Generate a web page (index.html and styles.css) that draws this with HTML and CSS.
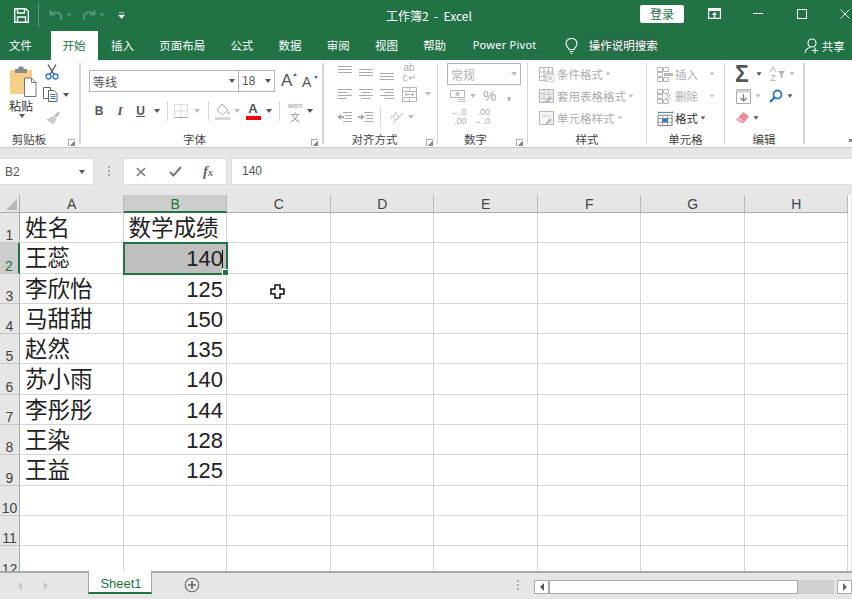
FILE: index.html
```html
<!DOCTYPE html>
<html lang="zh">
<head>
<meta charset="utf-8">
<title>工作簿2 - Excel</title>
<link rel="stylesheet" href="styles.css">
</head>
<body>
<div class="app">
  <header class="titlebar">
    <div class="qat">
      <svg class="ic-save" viewBox="0 0 15 15"><path d="M.7.7h11l2.600 2.600v11H.7z" fill="none" stroke="#fff" stroke-width="1.400"/><path d="M3.500 1v4h7V1M3.500 14V9h8v5" fill="none" stroke="#fff" stroke-width="1.300"/></svg>
      <span class="qat-sep"></span>
      <svg class="ic-undo" viewBox="0 0 14 12"><path d="M1.500 1v4.500H6M1.800 5.200C4 2.500 10 2.500 12 6c.8 1.800.3 3.800-1 5" fill="none" stroke="#5c9a79" stroke-width="1.600"/></svg>
      <i class="caret dim-green"></i>
      <svg class="ic-redo" viewBox="0 0 14 12"><path d="M12.500 1v4.500H8M12.200 5.200C10 2.500 4 2.500 2 6c-.8 1.800-.3 3.800 1 5" fill="none" stroke="#5c9a79" stroke-width="1.600"/></svg>
      <i class="caret dim-green"></i>
      <svg class="ic-custom" viewBox="0 0 7 7"><path d="M1 .5h5M.5 3h6L3.500 6.500z" fill="#fff" stroke="#fff" stroke-width=".6"/></svg>
    </div>
    <div class="doc-title">工作簿2&nbsp; -&nbsp; Excel</div>
    <div class="win">
      <button class="login">登录</button>
      <svg class="ic-display" viewBox="0 0 13 11"><path d="M.6.6h11.800v9.800H.6z" fill="none" stroke="#fff" stroke-width="1.200"/><path d="M1 1h11v2H1z" fill="#fff"/><path d="M6.500 4l2.700 2.700H7.300v3H5.700v-3H3.800z" fill="#fff"/></svg>
      <span class="w-min"></span>
      <span class="w-max"></span>
      <svg class="ic-close" viewBox="0 0 10 10"><path d="M.5.5l9 9M9.500.5l-9 9" stroke="#fff" stroke-width="1"/></svg>
    </div>
  </header>

  <nav class="tabs">
    <span class="tab tab-file">文件</span>
    <span class="tab tab-on">开始</span>
    <span class="tab">插入</span>
    <span class="tab">页面布局</span>
    <span class="tab">公式</span>
    <span class="tab">数据</span>
    <span class="tab">审阅</span>
    <span class="tab">视图</span>
    <span class="tab">帮助</span>
    <span class="tab tab-pp">Power Pivot</span>
    <svg class="ic-bulb" viewBox="0 0 13 16"><path d="M4 11.500C3.500 9.500 1 8.500 1 5.500a5.500 5 0 0 1 11 0c0 3-2.500 4-3 6zM4.500 13.500h4M5.500 15.300h2" fill="none" stroke="#fff" stroke-width="1.100"/></svg>
    <span class="tell">操作说明搜索</span>
    <span class="share">
      <svg class="ic-person" viewBox="0 0 17 16"><circle cx="8" cy="5" r="4" fill="none" stroke="#fff" stroke-width="1.100"/><path d="M1 15c.5-3 2.500-5 5-5.500M11 9.500v6M8 12.500h6" fill="none" stroke="#fff" stroke-width="1.100"/></svg>
      共享
    </span>
  </nav>

  <section class="ribbon">
    <div class="group g-clip">
      <div class="g-body clip-body">
        <div class="paste">
          <svg class="ic-paste" viewBox="0 0 28 31"><path d="M1 4h22v24H1z" fill="#f5cf87"/><path d="M6 3h3l1-2.500h4l1 2.500h3v4H6z" fill="#8a8a8a"/><path d="M15.500 12h7l4.500 4.500V30.500H15.500z" fill="#fff" stroke="#777" stroke-width="1"/><path d="M22.500 12v4.500H27" fill="none" stroke="#777"/></svg>
          <span class="paste-t">粘贴</span>
          <i class="caret"></i>
        </div>
        <div class="clip-tools">
          <svg class="ic-cut" viewBox="0 0 14 16"><path d="M3 .5l6 10M11 .5l-6 10" stroke="#555" stroke-width="1.300" fill="none"/><circle cx="3.500" cy="12.500" r="2.500" fill="none" stroke="#2b79c2" stroke-width="1.300"/><circle cx="10.500" cy="12.500" r="2.500" fill="none" stroke="#2b79c2" stroke-width="1.300"/></svg>
          <div class="copy-row">
            <svg class="ic-copy" viewBox="0 0 15 15"><path d="M.5.500h7v11h-7z" fill="#fff" stroke="#666"/><path d="M5.500 3.500h5.500l3 3v8h-8.500z" fill="#fff" stroke="#666"/><path d="M7.500 7.500h5M7.500 9.500h5M7.500 11.500h5" stroke="#2b79c2"/></svg>
            <i class="caret"></i>
          </div>
          <svg class="ic-brush" viewBox="0 0 16 16"><path d="M9 6L13 1.500l2 2-4 4.500z" fill="#bdbdbd"/><path d="M8.500 6l3 3-3 5.500L1 9.500z" fill="#c9c9c9"/></svg>
        </div>
      </div>
      <div class="g-label">剪贴板<i class="launcher"></i></div>
    </div>

    <div class="group g-font">
      <div class="g-body">
        <div class="font-row1">
          <div class="combo font-name"><span>等线</span><i class="caret"></i></div>
          <div class="combo font-size"><span>18</span><i class="caret"></i></div>
          <span class="grow-a">A<i class="up"></i></span>
          <span class="shrink-a">A<i class="down"></i></span>
        </div>
        <div class="font-row2">
          <b class="fmt fb">B</b>
          <i class="fmt fi">I</i>
          <u class="fmt fu">U</u>
          <i class="caret"></i>
          <span class="vsep"></span>
          <svg class="ic-border" viewBox="0 0 14 14"><path d="M.5.500h13v13H.5zM7 .5v13M.5 7h13" fill="none" stroke="#bbb" stroke-dasharray="1 1"/><path d="M.5 13.500h13" stroke="#aaa"/></svg>
          <i class="caret off"></i>
          <span class="vsep"></span>
          <svg class="ic-fill" viewBox="0 0 16 17"><path d="M7 1l6 6-5.500 5L2 7z" fill="#fff" stroke="#aaa"/><path d="M13.500 8l1.500 3h-3z" fill="#bbb"/><path d="M0 14h15v3H0z" fill="#d8d8d8"/></svg>
          <i class="caret off"></i>
          <span class="color-a">A</span>
          <i class="caret"></i>
          <span class="vsep"></span>
          <span class="wen"><small>wén</small>文</span>
          <i class="caret"></i>
        </div>
      </div>
      <div class="g-label">字体<i class="launcher"></i></div>
    </div>

    <div class="group g-align">
      <div class="g-body">
        <div class="al-row al-row1">
          <svg class="ic-lines-t" viewBox="0 0 14 14"><path d="M0 .5h14M0 3.500h14M0 6.500h14" stroke="#aaa"/></svg>
          <svg class="ic-lines-t" viewBox="0 0 14 14"><path d="M0 3.500h14M0 6.500h14M0 9.500h14" stroke="#aaa"/></svg>
          <svg class="ic-lines-t" viewBox="0 0 14 14"><path d="M0 7.500h14M0 10.500h14M0 13.500h14" stroke="#aaa"/></svg>
          <span class="wrap-t">ab<br>c↵</span>
        </div>
        <div class="al-row al-row2">
          <svg class="ic-lines" viewBox="0 0 14 12"><path d="M0 1.500h14M0 4.500h9M0 7.500h14M0 10.500h9" stroke="#aaa"/></svg>
          <svg class="ic-lines" viewBox="0 0 14 12"><path d="M0 1.500h14M2.500 4.500h9M0 7.500h14M2.500 10.500h9" stroke="#aaa"/></svg>
          <svg class="ic-lines" viewBox="0 0 14 12"><path d="M0 1.500h14M5 4.500h9M0 7.500h14M5 10.500h9" stroke="#aaa"/></svg>
          <svg class="ic-merge" viewBox="0 0 15 15"><path d="M.5.500h14v14H.5zM.5 4.500h14M.5 10.500h14M7.500.5v4M7.500 10.500v4" fill="none" stroke="#b5b5b5"/><path d="M3 7.500h9M3 7.500l2-1.500M3 7.500l2 1.500M12 7.500l-2-1.500M12 7.500l-2 1.500" stroke="#b5b5b5" fill="none"/></svg>
          <i class="caret off"></i>
        </div>
        <div class="al-row al-row3">
          <svg class="ic-indent" viewBox="0 0 15 12"><path d="M6 1.500h9M8 4.500h7M8 7.500h7M6 10.500h9" stroke="#aaa"/><path d="M0 6l4-3v2h3v2H4v2z" fill="#aaa"/></svg>
          <svg class="ic-indent" viewBox="0 0 15 12"><path d="M6 1.500h9M8 4.500h7M8 7.500h7M6 10.500h9" stroke="#aaa"/><path d="M7 6L3 3v2H0v2h3v2z" fill="#aaa"/></svg>
          <span class="vsep tall"></span>
          <svg class="ic-orient" viewBox="0 0 15 14"><path d="M1 9L8 2M4 13l10-10" stroke="#b5b5b5" fill="none"/><path d="M2 5l5 5M5 2l5 5" stroke="#c5c5c5"/></svg>
          <i class="caret off"></i>
        </div>
      </div>
      <div class="g-label">对齐方式<i class="launcher"></i></div>
    </div>

    <div class="group g-num">
      <div class="g-body">
        <div class="combo num-fmt"><span>常规</span><i class="caret off"></i></div>
        <div class="num-row2">
          <svg class="ic-money" viewBox="0 0 16 13"><path d="M.5.500h14v7H.5z" fill="none" stroke="#b5b5b5"/><circle cx="7.500" cy="4" r="2" fill="#bbb"/><path d="M8 9.500h7M8 11.500h7" stroke="#bbb"/></svg>
          <i class="caret off"></i>
          <span class="pct">%</span>
          <span class="comma">,</span>
        </div>
        <div class="num-row3">
          <span class="dec">←.0<br>.00</span>
          <span class="dec">.00<br>→.0</span>
        </div>
      </div>
      <div class="g-label">数字<i class="launcher"></i></div>
    </div>

    <div class="group g-style">
      <div class="g-body list">
        <div class="li">
          <svg class="ic-table" viewBox="0 0 15 15"><path d="M.5.500h13v13H.5zM5 .5v13M9.500.5v6M.5 5h13M.5 9.500h6" fill="none" stroke="#b5b5b5"/><path d="M7 7h8v8H7z" fill="#fff" stroke="#aaa"/><path d="M9 10h4M9 12h4" stroke="#aaa"/></svg>
          <span>条件格式</span><i class="caret off"></i>
        </div>
        <div class="li">
          <svg class="ic-table" viewBox="0 0 15 15"><path d="M.5.500h14v13H.5z" fill="#eee" stroke="#b5b5b5"/><path d="M5 .5v13M9.500.5v13M.5 5h14M.5 9.500h14" stroke="#c9c9c9"/><path d="M6 13l5-6 2 2-5 5z" fill="#bbb"/></svg>
          <span>套用表格格式</span><i class="caret off"></i>
        </div>
        <div class="li">
          <svg class="ic-table" viewBox="0 0 15 15"><path d="M.5.500h14v13H.5z" fill="#f3f3f3" stroke="#b5b5b5"/><path d="M6 13l5-6 2 2-5 5z" fill="#bbb"/><path d="M3 5h8" stroke="#ccc"/></svg>
          <span>单元格样式</span><i class="caret off"></i>
        </div>
      </div>
      <div class="g-label">样式</div>
    </div>

    <div class="group g-cell">
      <div class="g-body list">
        <div class="li">
          <svg class="ic-cells" viewBox="0 0 17 15"><path d="M.5.500h5v4h-5zM6.500.5h5v4h-5zM.5 5.500h5v4h-5zM.5 10.500h5v4h-5zM6.500 10.500h5v4h-5z" fill="none" stroke="#b5b5b5"/><path d="M7 6h9v3H7z" fill="#bbb"/></svg>
          <span>插入</span><i class="caret off wide"></i>
        </div>
        <div class="li">
          <svg class="ic-cells" viewBox="0 0 17 15"><path d="M.5.500h5v4h-5zM6.500.5h5v4h-5zM.5 5.500h5v4h-5zM.5 10.500h5v4h-5zM6.500 10.500h5v4h-5z" fill="none" stroke="#b5b5b5"/><path d="M9 5l5 5M14 5l-5 5" stroke="#aaa"/></svg>
          <span>删除</span><i class="caret off wide"></i>
        </div>
        <div class="li on">
          <svg class="ic-cells" viewBox="0 0 17 16"><path d="M1 1.500h15M1 .5v2M16 .5v2" stroke="#2b79c2" fill="none"/><path d="M.5 4.500h15v11H.5z" fill="#fff" stroke="#777"/><path d="M.5 8h15M.5 12h15M5.500 4.500v11M10.500 4.500v11" stroke="#999"/><path d="M5 8h6v4H5z" fill="#2b79c2"/></svg>
          <span>格式</span><i class="caret"></i>
        </div>
      </div>
      <div class="g-label">单元格</div>
    </div>

    <div class="group g-edit">
      <div class="g-body edit-body">
        <div class="edit-row">
          <span class="sigma">Σ</span><i class="caret"></i>
          <span class="az">A<br>Z</span><svg class="ic-funnel" viewBox="0 0 7 7"><path d="M0 0h7L4.500 3.500V7h-2V3.500z" fill="#b5b5b5"/></svg><i class="caret off"></i>
        </div>
        <div class="edit-row">
          <svg class="ic-down" viewBox="0 0 15 15"><path d="M.5.500h14v14H.5z" fill="#fff" stroke="#aaa"/><path d="M.5.500h14v3H.5z" fill="#ccc"/><path d="M7.500 5v7M4.500 9l3 3 3-3" stroke="#777" fill="none" stroke-width="1.200"/></svg><i class="caret off"></i>
          <svg class="ic-find" viewBox="0 0 14 14"><circle cx="8.500" cy="5.500" r="4" fill="none" stroke="#2b79c2" stroke-width="1.800"/><path d="M5.500 8.500L1 13" stroke="#2b79c2" stroke-width="2.400"/></svg><i class="caret"></i>
        </div>
        <div class="edit-row">
          <svg class="ic-eraser" viewBox="0 0 13 12"><path d="M7.500 0L13 4.500 7.500 11H4.500L0 7.500z" fill="#ee8a98"/><path d="M0 7.500L3 4.500l5 4.500-2 2H4.500z" fill="#f3b2bb"/></svg><i class="caret"></i>
        </div>
      </div>
      <div class="g-label">编辑</div>
    </div>
    <i class="collapse"></i>
  </section>

  <section class="formula">
    <div class="namebox"><span>B2</span><i class="caret"></i></div>
    <span class="dots"></span>
    <div class="fx-box">
      <svg class="ic-x" viewBox="0 0 11 11"><path d="M1 1l9 9M10 1l-9 9" stroke="#777" stroke-width="1.600"/></svg>
      <svg class="ic-check" viewBox="0 0 13 11"><path d="M1 6l3.500 3.500L12 1" stroke="#777" stroke-width="2" fill="none"/></svg>
      <em class="fx">f<small>x</small></em>
    </div>
    <div class="fbar">140</div>
  </section>

  <main class="sheet-wrap">
    <div class="sheet">
      <div class="corner"><i></i></div><div class="ch">A</div><div class="ch ch-on">B</div><div class="ch">C</div><div class="ch">D</div><div class="ch">E</div><div class="ch">F</div><div class="ch">G</div><div class="ch">H</div>

      <div class="rh">1</div><div class="c">姓名</div><div class="c">数学成绩</div><div class="c"></div><div class="c"></div><div class="c"></div><div class="c"></div><div class="c"></div><div class="c"></div>
      <div class="rh rh-on">2</div><div class="c">王蕊</div><div class="c n sel">140<span class="edit-caret"></span><span class="handle"></span></div><div class="c"></div><div class="c"></div><div class="c"></div><div class="c"></div><div class="c"></div><div class="c"></div>
      <div class="rh">3</div><div class="c">李欣怡</div><div class="c n">125</div><div class="c cursor-cell"><svg class="ic-cross" viewBox="0 0 15 15"><path d="M5 1h5v4h4v5h-4v4H5v-4H1V5h4z" fill="#fff" stroke="#111" stroke-width="1.500"/></svg></div><div class="c"></div><div class="c"></div><div class="c"></div><div class="c"></div><div class="c"></div>
      <div class="rh">4</div><div class="c">马甜甜</div><div class="c n">150</div><div class="c"></div><div class="c"></div><div class="c"></div><div class="c"></div><div class="c"></div><div class="c"></div>
      <div class="rh">5</div><div class="c">赵然</div><div class="c n">135</div><div class="c"></div><div class="c"></div><div class="c"></div><div class="c"></div><div class="c"></div><div class="c"></div>
      <div class="rh">6</div><div class="c">苏小雨</div><div class="c n">140</div><div class="c"></div><div class="c"></div><div class="c"></div><div class="c"></div><div class="c"></div><div class="c"></div>
      <div class="rh">7</div><div class="c">李彤彤</div><div class="c n">144</div><div class="c"></div><div class="c"></div><div class="c"></div><div class="c"></div><div class="c"></div><div class="c"></div>
      <div class="rh">8</div><div class="c">王染</div><div class="c n">128</div><div class="c"></div><div class="c"></div><div class="c"></div><div class="c"></div><div class="c"></div><div class="c"></div>
      <div class="rh">9</div><div class="c">王益</div><div class="c n">125</div><div class="c"></div><div class="c"></div><div class="c"></div><div class="c"></div><div class="c"></div><div class="c"></div>
      <div class="rh">10</div><div class="c"></div><div class="c"></div><div class="c"></div><div class="c"></div><div class="c"></div><div class="c"></div><div class="c"></div><div class="c"></div>
      <div class="rh">11</div><div class="c"></div><div class="c"></div><div class="c"></div><div class="c"></div><div class="c"></div><div class="c"></div><div class="c"></div><div class="c"></div>
      <div class="rh">12</div><div class="c"></div><div class="c"></div><div class="c"></div><div class="c"></div><div class="c"></div><div class="c"></div><div class="c"></div><div class="c"></div>
    </div>
  </main>

  <footer class="bottom">
    <i class="nav-l"></i>
    <i class="nav-r"></i>
    <div class="sheet-tab">Sheet1</div>
    <svg class="ic-add" viewBox="0 0 16 16"><circle cx="8" cy="8" r="6.800" fill="none" stroke="#666" stroke-width="1.100"/><path d="M8 4v8M4 8h8" stroke="#666" stroke-width="1.600"/></svg>
    <span class="dots dots-b"></span>
    <div class="hscroll">
      <span class="sb-btn"><i class="sb-l"></i></span>
      <span class="sb-thumb"></span>
      <span class="sb-track"></span>
      <span class="sb-btn sb-end"><i class="sb-r"></i></span>
    </div>
  </footer>
</div>
</body>
</html>
```

FILE: styles.css
```css
* { box-sizing: border-box; }
html, body { margin: 0; padding: 0; }
body { width: 852px; height: 599px; overflow: hidden; background: #e6e6e6; font-family: "Noto Sans CJK SC", "Noto Sans", sans-serif; color: #444; font-size: 12px; }
svg { display: block; flex: none; }
i, em { font-style: normal; }
.app { display: flex; flex-direction: column; width: 852px; height: 599px; }

.caret { display: block; width: 0; height: 0; border: 3.5px solid transparent; border-top: 4px solid #555; border-bottom: 0; flex: none; }
.caret.off { border-top-color: #bdbdbd; }
.caret.dim-green { border-top-color: #5c9a79; }

/* title bar */
.titlebar { height: 30px; background: #217346; color: #fff; display: flex; align-items: center; position: relative; flex: none; }
.qat { display: flex; align-items: center; width: 386px; padding-left: 14px; }
.ic-save { width: 15px; height: 15px; }
.qat-sep { width: 1px; height: 24px; background: #5c9a79; margin: 0 10px 0 9px; }
.ic-undo, .ic-redo { width: 14px; height: 12px; }
.ic-undo + .caret { margin: 0 10px 0 3px; transform: scale(.8); }
.ic-redo + .caret { margin: 0 11px 0 3px; transform: scale(.8); }
.ic-custom { width: 7px; height: 7px; margin-left: 2px; }
.doc-title { width: 254px; font-size: 12px; line-height: 17px; color: #fff; font-family: "Noto Sans CJK SC", sans-serif; }
.win { display: flex; align-items: center; flex: 1; }
.login { width: 44px; height: 18px; background: #fff; border: 0; border-radius: 2px; padding: 0; color: #217346; font: 12px/18px "Noto Sans CJK SC", sans-serif; margin-top: -2px; }
.ic-display { width: 13px; height: 11px; margin: -4px 0 0 24px; }
.w-min { width: 10px; height: 1px; background: #fff; margin: -3px 0 0 32px; }
.w-max { width: 10px; height: 10px; border: 1px solid #fff; margin: -3px 0 0 34px; }
.ic-close { width: 10px; height: 10px; margin: -3px 0 0 33px; }

/* tabs */
.tabs { height: 30px; background: #217346; display: flex; align-items: flex-end; flex: none; color: #fff; }
.tab { height: 29px; line-height: 28px; padding: 0 12.6px; font-size: 11.5px; color: #fff; white-space: nowrap; flex: none; }
.tab-file { width: 51px; padding: 0 0 0 9px; }
.tab-on { background: #fff; color: #217346; width: 47px; padding: 0 0 0 11.5px; border-bottom: 0; }
.tab-on + .tab { padding-left: 13px; }
.tab-pp { padding: 0 0 0 14px; font-family: "Noto Sans", sans-serif; font-size: 11px; letter-spacing: .25px; width: 106px; }
.ic-bulb { width: 13px; height: 16px; margin: 0 0 6px 0; }
.tell { background: #2c6a48; color: #fff; font-size: 11.5px; line-height: 15px; margin: 0 0 7px 11px; }
.share { display: flex; align-items: center; gap: 1px; height: 29px; margin-left: 146px; font-size: 11.500px; color: #fff; }
.ic-person { width: 17px; height: 16px; }

/* ribbon */
.ribbon { height: 88px; background: #fff; border-bottom: 1px solid #c8c8c8; display: flex; position: relative; flex: none; padding: 3px 0 3px; }
.group { display: flex; flex-direction: column; border-right: 1px solid #d6d6d6; flex: none; }
.g-body { flex: 1; min-height: 0; }
.g-label { height: 10px; line-height: 10px; text-align: center; color: #444; font-size: 11.500px; position: relative; white-space: nowrap; }
.launcher { position: absolute; right: 4px; bottom: -2px; width: 7px; height: 7px; border-left: 1px solid #aaa; border-top: 1px solid #aaa; background: linear-gradient(135deg, transparent 55%, #888 55%); }
.g-clip { width: 81px; border-right-width: 2px; }
.g-clip .g-label { padding-right: 21px; }
.g-font { width: 243px; border-right-width: 2px; }
.g-font .g-label { padding-right: 14px; }
.g-align { width: 114px; }
.g-align .g-label { padding-right: 12px; }
.g-num { width: 90px; border-right-width: 1px; }
.g-num .g-label { padding-right: 14px; }
.g-style { width: 119px; }
.g-cell { width: 78px; }
.g-edit { width: 80px; border-right-width: 2px; }
.collapse { position: absolute; right: 0; bottom: 5px; width: 3px; height: 3px; background: #888; }

.clip-body { display: flex; padding-left: 9px; }
.paste { width: 34px; display: flex; flex-direction: column; align-items: flex-start; }
.ic-paste { width: 28px; height: 31px; margin-top: 3px; }
.paste-t { font-size: 12px; line-height: 15px; margin-top: 1px; color: #333; }
.paste .caret { margin: 1px 0 0 10px; }
.clip-tools { display: flex; flex-direction: column; padding-left: 0; }
.ic-cut { width: 14px; height: 16px; margin: 1px 0 0 2px; }
.copy-row { display: flex; align-items: center; gap: 5px; margin-top: 7px; }
.ic-copy { width: 15px; height: 15px; }
.ic-brush { width: 16px; height: 16px; margin: 8px 0 0 2px; }

.font-row1 { display: flex; align-items: center; padding: 7px 0 0 8px; }
.combo { height: 22px; border: 1px solid #b4b4b4; display: flex; align-items: center; justify-content: space-between; padding: 0 3px; color: #555; font-size: 12px; }
.font-name { width: 150px; }
.font-size { width: 37px; margin-left: -1px; padding-left: 3px; font-family: "Liberation Sans", sans-serif; }
.grow-a, .shrink-a { position: relative; display: block; font-family: "Liberation Sans", sans-serif; color: #555; }
.grow-a { font-size: 17px; margin-left: 6px; width: 13px; }
.shrink-a { font-size: 14px; margin: 2px 0 0 8px; width: 13px; }
.up, .down { position: absolute; right: -3px; top: 2px; width: 0; height: 0; border: 2.500px solid transparent; }
.up { border-bottom: 3px solid #2b79c2; border-top: 0; }
.down { border-top: 3px solid #2b79c2; border-bottom: 0; }

.font-row2 { display: grid; grid-template-columns: 22px 20px 21px 12px 8px 20px 12px 10px 20px 8px 24px 8px 12px 20px 10px; align-items: center; justify-items: center; height: 24px; margin: 7px 0 0 7px; }
.fmt { font-family: "Liberation Sans", sans-serif; font-size: 12px; color: #555; }
.fb { font-weight: 700; }
.fi { font-family: "Liberation Serif", serif; font-style: italic; font-weight: 700; font-size: 13px; }
.fu { font-weight: 700; }
.vsep { display: block; width: 1px; height: 20px; background: #d6d6d6; }
.vsep.tall { height: 20px; }
.ic-border { width: 14px; height: 14px; }
.ic-fill { width: 16px; height: 17px; }
.color-a { display: block; width: 15px; text-align: center; font: 700 13px/14px "Liberation Sans", sans-serif; color: #555; border-bottom: 4px solid #f00000; }
.wen { display: flex; flex-direction: column; align-items: center; font-size: 10px; line-height: 11px; color: #999; }
.wen small { font: 8px/10px "Liberation Sans", sans-serif; color: #999; }

.al-row { display: grid; grid-template-columns: 21px 21px 21px 24px 14px; align-items: center; justify-items: center; padding-left: 10px; }
.al-row1 { height: 20px; }
.al-row2 { height: 20px; margin-top: 1px; }
.al-row3 { height: 20px; margin-top: 3px; grid-template-columns: 21px 21px 9px 22px 8px; }
.ic-lines { width: 14px; height: 12px; }
.ic-lines-t { width: 14px; height: 14px; }
.wrap-t { font: 10px/10px "Liberation Sans", sans-serif; color: #aaa; text-align: center; }
.ic-merge { width: 15px; height: 15px; }
.ic-indent { width: 15px; height: 12px; }
.ic-orient { width: 15px; height: 14px; }

.g-num .g-body { padding: 0 0 0 9px; }
.num-fmt { width: 74px; height: 22px; color: #b0b0b0; }
.num-row2 { display: flex; align-items: center; height: 22px; padding-left: 3px; }
.ic-money { width: 16px; height: 13px; }
.num-row2 .caret { margin-left: 4px; }
.pct { font: 15px/20px "Liberation Sans", sans-serif; color: #aaa; margin-left: 7px; }
.comma { font: 700 15px/18px "Liberation Serif", serif; color: #999; margin: -5px 0 0 11px; }
.num-row3 { display: flex; gap: 7px; padding-left: 3px; margin-top: 1px; }
.dec { font: 9px/9px "Liberation Sans", sans-serif; color: #aaa; text-align: right; }

.list { padding: 0 0 0 11px; display: flex; flex-direction: column; gap: 0; }
.li { display: flex; align-items: center; height: 22px; color: #adadad; font-size: 11.500px; white-space: nowrap; }
.li.on { color: #333; }
.li .caret { margin-left: 2px; transform: scale(.8); }
.li .caret.wide { margin-left: 11px; }
.ic-table { width: 15px; height: 15px; margin-right: 3px; }
.g-cell .list { padding-left: 10px; }
.ic-cells { width: 17px; height: 15px; margin-right: 1px; }

.edit-body { padding: 0 0 0 10px; display: flex; flex-direction: column; }
.edit-row { display: flex; align-items: center; height: 22px; }
.sigma { width: 17px; font: 700 23px/22px "Liberation Sans", sans-serif; color: #555; }
.edit-row .caret { margin-left: 4px; transform: scale(.85); }
.az { font: 9px/9px "Liberation Sans", sans-serif; color: #aaa; margin-left: 7px; width: 8px; text-align: center; }
.ic-funnel { width: 7px; height: 7px; margin-left: 1px; }
.ic-down { width: 15px; height: 15px; margin-left: 1px; }
.ic-find { width: 14px; height: 14px; margin-left: 8px; }
.ic-eraser { width: 13px; height: 12px; margin-left: 1px; }

/* formula bar */
.formula { display: flex; height: 27px; margin-top: 10px; flex: none; }
.namebox { width: 94px; background: #fff; border: 1px solid #dcdcdc; border-left: 0; display: flex; align-items: center; justify-content: space-between; padding: 0 8px 0 5px; font: 12px "Liberation Sans", sans-serif; color: #555; }
.dots { width: 2px; height: 10px; margin: 8px 13px 0 14px; background: repeating-linear-gradient(#aaa 0 2px, transparent 2px 4px); flex: none; }
.fx-box { width: 104px; background: #fff; border: 1px solid #dcdcdc; display: flex; align-items: center; padding-left: 12px; }
.ic-x { width: 10px; height: 10px; }
.ic-check { width: 13px; height: 11px; margin-left: 23px; }
.fx { font: italic 700 15px "Liberation Serif", serif; color: #666; margin-left: 21px; }
.fx small { font-size: 10px; }
.fbar { flex: 1; margin-left: 4px; background: #fff; border: 1px solid #dcdcdc; border-right: 0; padding-left: 10px; line-height: 25px; font: 12px/25px "Liberation Sans", sans-serif; color: #555; }

/* sheet */
.sheet-wrap { height: 378px; margin-top: 10px; overflow: hidden; flex: none; border-bottom: 2px solid #a9a9a9; }
.sheet { display: grid; grid-template-columns: 20px repeat(8, 103.5px); grid-template-rows: 18px repeat(12, 30.3px); width: 851px; background: #fff; position: relative; }
.corner { background: #e6e6e6; border-right: 1px solid #ababab; border-bottom: 1px solid #ababab; position: relative; }
.corner i { position: absolute; right: 2px; bottom: 2px; width: 0; height: 0; border-left: 11px solid transparent; border-bottom: 11px solid #b8b8b8; }
.ch { background: #e6e6e6; border-right: 1px solid #b8b8b8; border-bottom: 1px solid #ababab; text-align: center; padding: 1px 0 0 1px; font: 14px/16px "Liberation Sans", sans-serif; color: #444; overflow: hidden; }
.ch-on { background: #cdcdcd; border-bottom: 2px solid #217346; color: #217346; }
.rh { background: #e6e6e6; border-right: 1px solid #ababab; border-bottom: 1px solid #c6c6c6; display: flex; align-items: flex-end; justify-content: center; font: 14px/14px "Liberation Sans", sans-serif; color: #444; }
.rh-on { background: #cdcdcd; border-right: 2px solid #217346; color: #217346; }
.c { border-right: 1px solid #d4d4d4; border-bottom: 1px solid #d4d4d4; padding: 0 3px 0 5px; font-size: 22.500px; line-height: 27px; color: #222; white-space: nowrap; overflow: visible; font-family: "Noto Sans CJK SC", sans-serif; position: relative; }
.n { text-align: right; font-family: "Liberation Sans", sans-serif; font-size: 22px; line-height: 31px; }
.sel { background: #bfbfbf; outline: 2px solid #217346; outline-offset: -1px; z-index: 1; }
.edit-caret { position: absolute; right: 3px; top: 7px; width: 1px; height: 18px; background: #111; }
.handle { position: absolute; right: -3px; bottom: -3px; width: 5px; height: 5px; background: #217346; border: 1px solid #fff; box-sizing: content-box; }
.ic-cross { position: absolute; left: 43px; top: 10px; width: 15px; height: 15px; }

/* bottom bar */
.bottom { flex: 1; display: flex; align-items: flex-start; position: relative; }
.nav-l, .nav-r { display: block; width: 0; height: 0; margin-top: 9px; border: 4px solid transparent; }
.nav-l { border-right: 4px solid #c4c4c4; border-left: 0; margin-left: 18px; }
.nav-r { border-left: 4px solid #c4c4c4; border-right: 0; margin-left: 22px; }
.sheet-tab { width: 65px; height: 23px; margin: -2px 0 0 40px; padding-left: 2px; background: #fff; border-left: 1px solid #a9a9a9; border-right: 1px solid #a9a9a9; border-bottom: 2px solid #217346; color: #217346; text-align: center; font: 13px/25px "Liberation Sans", sans-serif; }
.ic-add { width: 16px; height: 16px; margin: 4px 0 0 32px; }
.dots-b { margin: 7px 0 0 317px; }
.hscroll { display: flex; height: 14px; margin: 7px 0 0 15px; }
.sb-btn { width: 15px; background: #fff; border: 1px solid #ababab; display: flex; align-items: center; justify-content: center; }
.sb-end { margin-left: 3px; }
.sb-l, .sb-r { display: block; width: 0; height: 0; border: 4px solid transparent; }
.sb-l { border-right: 4px solid #555; border-left: 0; }
.sb-r { border-left: 4px solid #666; border-right: 0; }
.sb-thumb { width: 249px; background: #fff; border: 1px solid #ababab; }
.sb-track { width: 36px; background: #d0d0d0; }
```
